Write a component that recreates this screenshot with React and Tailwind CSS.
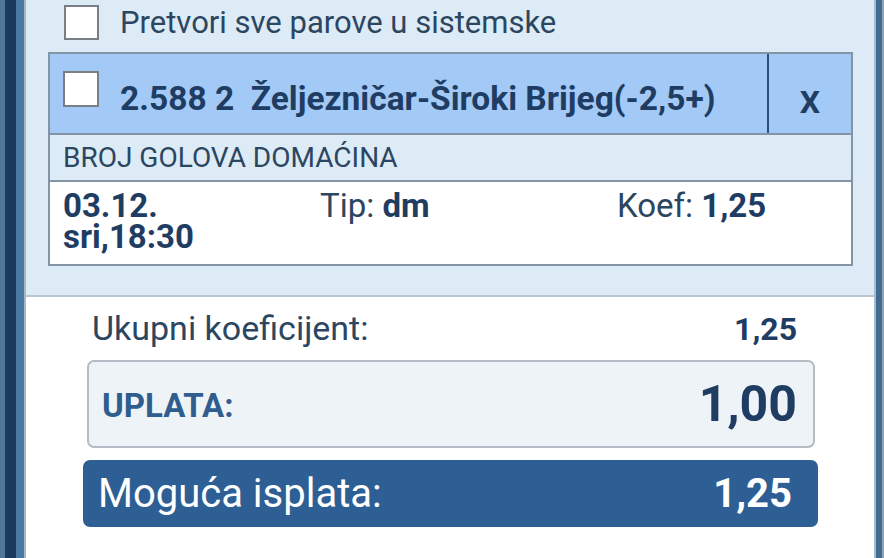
import React from "react";

const Box = ({ className = "" }) => (
    <div className={`w-[36px] h-[36px] bg-white border-2 border-[#7a7f85] shrink-0 ${className}`} />
);

const App = () => {
    return (
        <div className="w-[884px] h-[558px] flex bg-white overflow-hidden font-['Roboto',sans-serif]">
            {/* lijevi okvir */}
            <div className="w-[5px] bg-[#4f7898]" />
            <div className="w-[11px] bg-[#1b3a5e]" />
            <div className="w-[8px] bg-[#4b79a2]" />
            <div className="w-[2px] bg-[#a4b8ca]" />

            <div className="flex-1 flex flex-col">
                {/* parovi */}
                <div className="bg-[#dcebf5] border-b-2 border-[#b9c6d0] pt-[5px] pb-[29px]">
                    <div className="flex items-center h-[35px] pl-[38px]">
                        <Box className="!w-[35px] !h-[35px]" />
                        <span className="ml-[21px] text-[31px] text-[#2c4661] leading-none">
                            Pretvori sve parove u sistemske
                        </span>
                    </div>

                    <div className="mt-[12px] ml-[22px] w-[805px] border-2 border-[#8394a6]">
                        <div className="flex h-[79px] bg-[#a3c9f7]">
                            <div className="flex-1 flex items-center pl-[13px]">
                                <Box className="-mt-[10px]" />
                                <span className="ml-[21px] mt-[12px] text-[33.5px] font-bold text-[#1f3d63] whitespace-pre">
                                    2.588 2  Željezničar-Široki Brijeg(-2,5+)
                                </span>
                            </div>
                            <div className="w-[84px] border-l-2 border-[#2b4f7a] flex items-center justify-center pt-[17px] text-[32px] font-bold text-[#1f3d63]">
                                X
                            </div>
                        </div>
                        <div className="h-[47px] border-t-2 border-[#8394a6] flex items-center pl-[13px] text-[28px] text-[#2c4661]">
                            BROJ GOLOVA DOMAĆINA
                        </div>
                        <div className="h-[84px] border-t-2 border-[#8394a6] bg-white flex pl-[13px] pt-[8px] text-[33px] leading-[31px] text-[#1f3d63]">
                            <div className="w-[257px] font-bold">
                                03.12.<br />sri,18:30
                            </div>
                            <div className="w-[297px] text-[#2c4661]">
                                Tip: <span className="font-bold text-[#1f3d63]">dm</span>
                            </div>
                            <div className="text-[#2c4661]">
                                Koef: <span className="font-bold text-[#1f3d63]">1,25</span>
                            </div>
                        </div>
                    </div>
                </div>

                {/* ukupno */}
                <div className="flex-1 bg-white">
                    <div className="flex justify-between items-center h-[63px] pl-[66px] pr-[77px]">
                        <span className="text-[34px] text-[#2c4661]">Ukupni koeficijent:</span>
                        <span className="text-[32px] font-bold text-[#1f3d63]">1,25</span>
                    </div>
                    <div className="ml-[61px] mr-[59px] h-[88px] rounded-[7px] border-2 border-[#b3bcc5] bg-[#eef3f8] flex items-center justify-between pl-[13px] pr-[16px]">
                        <span className="text-[33px] font-bold text-[#2f5d8e] mt-[4px]">UPLATA:</span>
                        <span className="text-[50px] font-bold text-[#1f3d63]">1,00</span>
                    </div>
                    <div className="mt-[12px] ml-[57px] mr-[56px] h-[67px] rounded-[7px] bg-[#2e5f94] flex items-center justify-between pl-[15px] pr-[26px] text-white">
                        <span className="text-[40px]">Moguća isplata:</span>
                        <span className="text-[40px] font-bold">1,25</span>
                    </div>
                </div>
            </div>

            {/* desni okvir */}
            <div className="w-[2px] bg-[#a9bccb]" />
            <div className="w-[6px] bg-[#416c91]" />
            <div className="w-[2px] bg-[#8ea3b5]" />
        </div>
    );
};

export default App;
